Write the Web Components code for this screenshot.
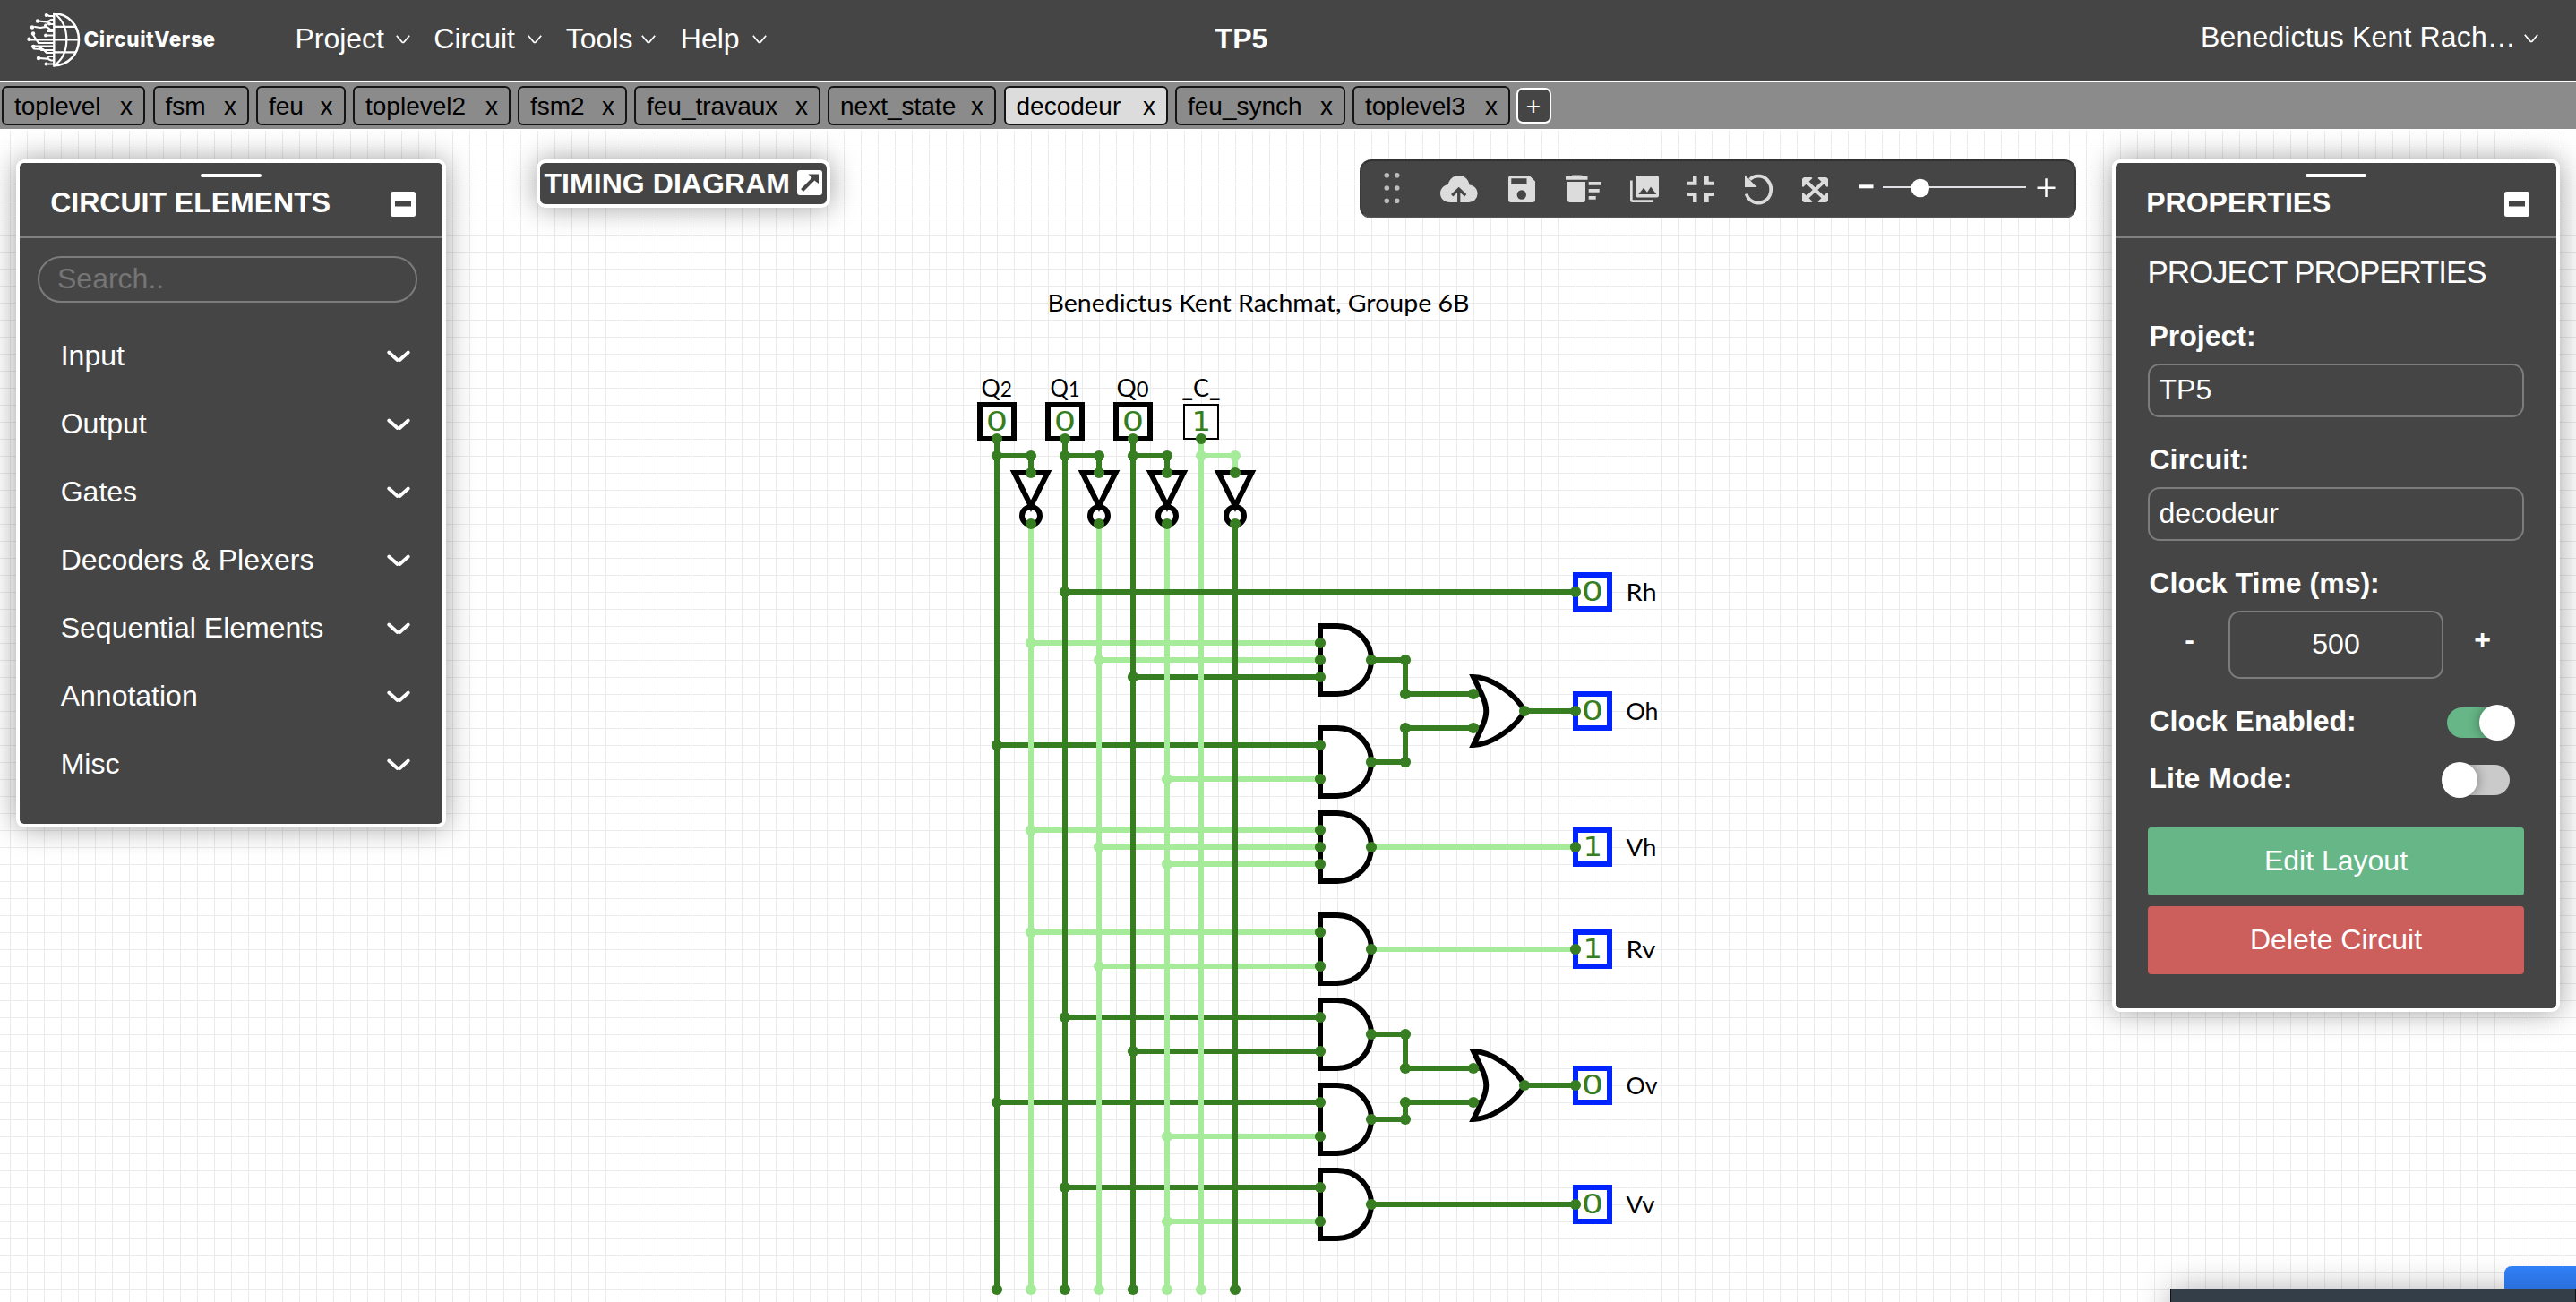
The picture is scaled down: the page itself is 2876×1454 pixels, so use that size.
<!DOCTYPE html>
<html lang="en">
<head>
<meta charset="utf-8">
<title>CircuitVerse</title>
<style>
  html, body { margin: 0; height: 100%; overflow: hidden; background: #fff; }
  body { font: 32px/40px "Liberation Sans", Arial, sans-serif; color: #fff; }
</style>
</head>
<body>
<cv-app></cv-app>
<script>
const define = (name, html, setup) => customElements.define(name, class extends HTMLElement {
  connectedCallback() {
    if (this.shadowRoot) return;
    const root = this.attachShadow({ mode: 'open' });
    root.innerHTML = typeof html === 'function' ? html(this) : html;
    if (setup) setup(this, root);
  }
});

/* Text tracked so that its advance width equals the w attribute. */
define('fit-text', `<style>:host{display:inline-block;white-space:nowrap}</style><span><slot></slot></span>`, (el, root) => {
  const span = root.querySelector('span');
  const natural = span.getBoundingClientRect().width;
  const n = el.textContent.length;
  if (natural) span.style.letterSpacing = ((+el.getAttribute('w') - natural) / n) + 'px';
});

define('cv-logo', `
<style>
  :host { display: flex; height: 90px; }
  svg { flex: none; }
  .name { font-family: Inter, "Liberation Sans", sans-serif; font-weight: 800; font-size: 22.500px; line-height: 30px; padding-top: 28.500px; margin-left: 1.500px; }
</style>
<svg width="62" height="90" viewBox="30 0 62 90" fill="none" stroke="#fff" stroke-width="2.2" stroke-linecap="round">
  <path stroke-width="2.4" d="M60.3 15v58.4"/>
  <path stroke-width="2.6" d="M60.3 15.2C76 15.2 88 28 88 44.3S76 73.2 60.3 73.2"/>
  <path d="M61 15.4C70 22 74.3 32 74.3 44.3S70 66.500 61 73M61 29.800h23.500M61 44.300h27M61 58.300h23.500"/>
  <path d="M60 18h-5l-2-1M60 22h-3l-4 2.500-10-1M60 27h-5M60 33h-4l-4-3-7 1-6-1M60 39.500h-8M59 35h-6M60 44.300H35l-3-.5M60 48H43l-6-9M60 51.500H36M60 56H46M60 59h-8l-4-4-10-.5-1-1M60 63h-5l-3 2.500-8-.500M60 67.500h-3l-3-1.500M60 71.500h-8"/>
  <g fill="#fff" stroke="none"><circle cx="51.700" cy="17" r="2"/><circle cx="42" cy="23.500" r="2.200"/><circle cx="55" cy="26.500" r="2"/><circle cx="36" cy="30.500" r="2.200"/><circle cx="51" cy="28.500" r="2"/><circle cx="37" cy="37.500" r="2.200"/><circle cx="51" cy="39.500" r="2"/><circle cx="32.500" cy="43.800" r="2.200"/><circle cx="37.500" cy="52" r="2.200"/><circle cx="45" cy="53.500" r="2.200"/><circle cx="43" cy="65" r="2.200"/><circle cx="51.500" cy="71.500" r="2"/></g>
</svg>
<div class="name"><fit-text w="147">CircuitVerse</fit-text></div>`);

define('menu-item', `
<style>
  :host { display: flex; justify-content: space-between; }
  svg { margin-top: 15.500px; flex: none; }
</style>
<slot></slot><svg width="16" height="12" viewBox="0 0 16 12" fill="none" stroke="#fff" stroke-width="1.700"><path d="M.8 1.800L6.800 8.800Q8 10 9.200 8.800L15.200 1.800"/></svg>`);

define('cv-header', `
<style>
  :host { display: grid; grid-template-columns: 329.400px 1027.200px 1fr auto; height: 90px; background: #454545; border-bottom: 2px solid #fff; }
  cv-logo { padding-left: 30px; }
  nav { display: flex; padding-top: 22.500px; }
  .title { font-weight: 700; padding-top: 22.500px; }
  .user { padding: 21px 42px 0 0; width: 377px; }
  .user menu-item { height: 40px; }
</style>
<cv-logo></cv-logo>
<nav>
  <menu-item style="width:128.500px;margin-right:26.400px">Project</menu-item>
  <menu-item style="width:120.500px;margin-right:27px">Circuit</menu-item>
  <menu-item style="width:100.500px;margin-right:27.500px">Tools</menu-item>
  <menu-item style="width:96.500px">Help</menu-item>
</nav>
<div class="title">TP5</div>
<div class="user"><menu-item><fit-text w="352">Benedictus Kent Rach…</fit-text></menu-item></div>`);

define('circuit-tab', `
<style>
  :host { display: flex; justify-content: space-between; box-sizing: border-box; height: 44px; padding: 0 12px; border: 2px solid #141414; border-radius: 6px; color: #000; font-size: 28px; line-height: 41px; }
  :host([active]) { background: #dcdcdc; }
</style>
<span><slot></slot></span><span>x</span>`);

define('tab-bar', () => {
  const tabs = [['toplevel', 160, 8.5], ['fsm', 107.5, 8], ['feu', 99.5, 8.5], ['toplevel2', 176, 8], ['fsm2', 122, 8], ['feu_travaux', 208, 8], ['next_state', 188, 8.5], ['decodeur', 183.5, 8], ['feu_synch', 190, 8], ['toplevel3', 176, 6.5]];
  return `<style>
  :host { display: flex; align-items: center; box-sizing: border-box; height: 52px; padding-left: 2px; background: #8b8b8b; }
  .add { box-sizing: border-box; width: 39px; height: 40px; border: 2px solid #fff; border-radius: 7px; background: #454545; font-size: 28px; line-height: 38px; text-align: center; }
  </style>` + tabs.map(([t, w, m]) => `<circuit-tab ${t === 'decodeur' ? 'active' : ''} style="width:${w}px;margin-right:${m}px">${t}</circuit-tab>`).join('') + `<div class="add">+</div>`;
});

define('tool-panel', el => `
<style>
  :host { display: flex; flex-direction: column; box-sizing: border-box; border: 4px solid #fff; border-radius: 9px; background: #454545; box-shadow: 0 0 32px rgba(0,0,0,.38); }
  header { display: flex; flex-direction: column; height: 82px; border-bottom: 2px solid #808080; }
  .grip { align-self: center; width: 68px; height: 4px; margin-top: 12px; border-radius: 2px; background: #fff; }
  .row { display: flex; justify-content: space-between; padding: 0 30px 0 34.200px; font-weight: 700; }
  .row span { margin-top: 8.400px; }
  svg { margin-top: 16px; }
</style>
<header><div class="grip"></div><div class="row"><span>${el.getAttribute('label')}</span>
<svg width="28" height="28"><rect width="28" height="28" rx="2.500" fill="#fff"/><rect x="5" y="11" width="18" height="5.500" fill="#454545"/></svg></div></header>
<slot></slot>`);

define('element-group', `
<style>:host { display: flex; justify-content: space-between; align-items: center; height: 76px; padding: 0 35.500px 0 45.700px; } svg { margin-top: 3px; }</style>
<slot></slot><svg width="28" height="16" viewBox="0 0 28 16" fill="none" stroke="#fff" stroke-width="3.800" stroke-linecap="round"><path d="M3.200 3.500L12.700 12M15.300 12L24.800 3.500"/></svg>`);

define('elements-panel', () => `
<style>
  :host { display: block; width: 480px; }
  tool-panel { height: 746px; }
  .search { display: flex; align-items: center; box-sizing: border-box; width: 424px; height: 52px; margin: 20px 0 20.500px 20px; padding: 0 0 3px 20px; border: 2px solid #7c7c7c; border-radius: 26px; color: #757575; }
</style>
<tool-panel label="CIRCUIT ELEMENTS"><div class="search">Search..</div>
${['Input', 'Output', 'Gates', 'Decoders &amp; Plexers', 'Sequential Elements', 'Annotation', 'Misc'].map(t => `<element-group>${t}</element-group>`).join('')}
</tool-panel>`);

define('timing-button', `
<style>
  :host { display: flex; box-sizing: border-box; width: 328.500px; height: 54px; padding-left: 5px; border: 4px solid #fff; border-radius: 10px; background: #454545; box-shadow: 0 0 32px rgba(0,0,0,.38); font-weight: 700; }
  span { margin-top: 3px; }
  svg { margin: 8px 0 0 8px; }
</style>
<span><fit-text w="274.500">TIMING DIAGRAM</fit-text></span>
<svg width="28" height="28"><rect width="28" height="28" rx="3" fill="#fff"/><path d="M5.500 22.500L20 8" stroke="#454545" stroke-width="4"/><path d="M12.500 4.500H24V15L20.500 12.500L15.500 7.500Z" fill="#454545"/></svg>`);

define('quick-toolbar', () => {
  const icon = (x, w, m, body) => `<svg width="${w}" height="62" viewBox="${x} 180 ${w} 62" style="margin-left:${m}px">${body}</svg>`;
  const dots = [1548.3, 1559.7].map(x => [195.700, 210, 224.300].map(y => `<circle cx="${x}" cy="${y}" r="2.800" fill="#bdbdbd"/>`).join('')).join('');
  return `<style>
  :host { display: flex; box-sizing: border-box; width: 800px; height: 66px; border: 2px solid #3a3a3a; border-top-color: #323232; border-bottom-color: #565656; border-radius: 13px; background: #454545; }
  svg { flex: none; fill: #dcdcdc; overflow: visible; }
  </style>` +
  icon(1545, 18, 25, dots) +
  icon(1608, 42, 45, `<path d="M1619 226h20.600a9.800 9.800 0 0 0 10-9.800c0-5.500-4-9.300-9-9.700C1639.500 200 1634.500 196 1628.700 196S1618 200 1616.800 206C1611.500 207 1608 211.200 1608 216c0 5.700 4.800 10 11 10z"/><path d="M1621.200 218.200l7.500-7.200 7.500 7.200M1628.700 212v14" fill="none" stroke="#454545" stroke-width="3.300"/>`) +
  icon(1684, 30, 34, `<path fill-rule="evenodd" d="M1687 196h20.500l6.500 6.500V223a3 3 0 0 1-3 3h-24a3 3 0 0 1-3-3v-24a3 3 0 0 1 3-3zM1687.300 199.300v6.700h17.200v-6.700z"/><circle cx="1698.800" cy="217.500" r="5.200" fill="#454545"/>`) +
  icon(1748, 40, 34, `<path d="M1748 197h6l1.500-1.500h10l1.500 1.500h5.500v3.800H1748zM1750 203h20v20a3 3 0 0 1-3 3h-14a3 3 0 0 1-3-3zM1773.700 203h14.300v3.800h-14.300zM1773.700 211h12v3.800h-12zM1773.700 219h8v3.800h-8z"/>`) +
  icon(1820, 32, 32, `<path d="M1820 201.500h2.700v21.800h23v2.700h-23a2.700 2.700 0 0 1-2.700-2.700z"/><rect x="1826" y="196" width="26" height="24.500" rx="2.500"/><path d="M1829.300 217l5.700-7.300 4 5 4-6.200 6.300 8.500z" fill="#454545"/>`) +
  icon(1884, 30, 32, `<path d="M1890 196h4.500v10.800H1884v-4h6zM1903 196h4.700v6.800h6.300v4h-11zM1884 215h10.500v11H1890v-7h-6zM1903 215h11v4h-6.300v7h-4.700z"/>`) +
  icon(1948, 30, 34, `<path d="M1949.600 216.500A14.200 15 0 1 0 1953.500 200.500" fill="none" stroke="#dcdcdc" stroke-width="3.800"/><path d="M1948 195.500l13.500 13.500H1948z"/>`) +
  icon(2012, 29, 34, `<path d="M2016 202l21 20M2037 202l-21 20" fill="none" stroke="#dcdcdc" stroke-width="3.800"/><path d="M2014 198h8.500l1 1-10.500 10-1-1v-8.200zM2039 198h-8.500l-1 1 10.500 10 1-1v-8.200zM2014 226h8.500l1-1-10.500-10-1 1v8.200zM2039 226h-8.500l-1-1 10.500-10 1 1v8.200z"/>`) +
  icon(2075, 16.5, 34, `<rect x="2075.500" y="206.300" width="16" height="4" fill="#fff"/>`) +
  icon(2102, 160, 10.5, `<rect x="2102" y="208" width="160" height="2" fill="#dfe1e7"/><circle cx="2143.800" cy="210" r="10.300" fill="#fff"/>`) +
  icon(2274, 21, 12, `<path d="M2274.500 209.700h20M2284.500 199.300v20.700" stroke="#fff" stroke-width="2.500"/>`);
});

define('toggle-switch', el => {
  const on = el.hasAttribute('on');
  const cx = on ? 60 : 20;
  return `<style>:host{display:block;height:40px} svg{display:block;overflow:visible}</style>
  <svg width="${on ? 80 : 78}" height="40"><defs><clipPath id="c"><rect x="4" y="3" width="72" height="34" rx="17"/></clipPath><filter id="f" x="-60%" y="-60%" width="220%" height="220%"><feGaussianBlur stdDeviation="7"/></filter></defs>
  <g clip-path="url(#c)"><rect x="4" y="3" width="72" height="34" fill="${on ? '#66b687' : '#cacaca'}"/><circle cx="${cx}" cy="20" r="20" fill="#000" opacity=".4" filter="url(#f)"/></g>
  <circle cx="${cx}" cy="20" r="20" fill="#fff"/></svg>`;
});

define('properties-panel', `
<style>
  :host { display: block; width: 500px; }
  tool-panel { height: 952px; }
  .body { display: flex; flex-direction: column; padding: 17.300px 36px 0; }
  .heading { font-size: 35px; padding-top: 1px; height: 39px; margin-left: -.5px; }
  .label { font-weight: 700; margin-left: 1.500px; }
  .field { display: flex; align-items: center; box-sizing: border-box; height: 60px; padding: 0 0 2px 10.500px; border: 2px solid #7c7c7c; border-radius: 13px; }
  .clock { display: grid; grid-template-columns: 90px 240px 90px; height: 76px; margin-top: 11px; font-weight: 700; text-align: center; }
  .clock > * { padding-top: 12px; }
  .clock > :first-child { padding-left: 3px; }
  .clock > :last-child { padding-right: 3px; }
  .clock .value { box-sizing: border-box; padding-top: 15px; border: 2px solid #7c7c7c; border-radius: 13px; font-weight: 400; }
  .line { display: flex; justify-content: space-between; height: 40px; }
  .line toggle-switch { margin-top: 2.600px; }
  .btn { height: 76px; line-height: 74px; border-radius: 4px; text-align: center; }
</style>
<tool-panel label="PROPERTIES"><div class="body">
  <div class="heading"><fit-text w="378">PROJECT PROPERTIES</fit-text></div>
  <div class="label" style="margin-top:31.600px">Project:</div>
  <div class="field" style="margin-top:11px">TP5</div>
  <div class="label" style="margin-top:27.200px">Circuit:</div>
  <div class="field" style="margin-top:10.800px">decodeur</div>
  <div class="label" style="margin-top:26.900px">Clock Time (ms):</div>
  <div class="clock"><div>-</div><div class="value">500</div><div>+</div></div>
  <div class="line" style="margin-top:26.900px"><span class="label">Clock Enabled:</span><toggle-switch on style="margin-right:10px"></toggle-switch></div>
  <div class="line" style="margin-top:24px"><span class="label">Lite Mode:</span><toggle-switch style="margin-right:14px"></toggle-switch></div>
  <div class="btn" style="margin-top:35px;background:#66b687">Edit Layout</div>
  <div class="btn" style="margin-top:12px;background:#cc5f5c">Delete Circuit</div>
</div></tool-panel>`);

/* The schematic: one grid unit is 19px; column 0 and row 0 sit on the pin of Q2. */
define('circuit-canvas', () => {
  const D = '#377e22', L = '#a6eb99';
  const X = c => 1113 + 19 * c, Y = r => 490 + 19 * r;
  const wire = (col, ...p) => `<polyline fill="none" stroke="${col}" stroke-width="6" points="${p.map(([c, r]) => X(c) + ',' + Y(r)).join(' ')}"/>`;
  const dot = (c, r, col = D) => `<circle cx="${X(c)}" cy="${Y(r)}" r="6.100" fill="${col}"/>`;
  const and = y => `<path d="M1474 ${y - 38}H1493A38 38 0 0 1 1493 ${y + 38}H1474Z" fill="#fff" stroke="#000" stroke-width="6"/>`;
  const or = y => `<path d="M1645 ${y - 38}C1664 ${y - 38} 1692.500 ${y - 19} 1702 ${y}C1692.500 ${y + 19} 1664 ${y + 38} 1645 ${y + 38}C1664 ${y} 1664 ${y} 1645 ${y - 38}Z" fill="#fff" stroke="#000" stroke-width="6"/>`;
  const digit = (v, x, y) => v
    ? `<text x="${x - 10.500}" y="${y}" font-family="DejaVu Sans" font-size="29.500" fill="${D}" textLength="21.500" lengthAdjust="spacingAndGlyphs">1</text>`
    : `<text x="${x - 12.200}" y="${y}" font-family="DejaVu Sans" font-size="29.500" fill="${D}" textLength="24.400" lengthAdjust="spacingAndGlyphs">0</text>`;
  const cols = [[0, D, 0], [2, L, 5], [4, D, 0], [6, L, 5], [8, D, 0], [10, L, 5], [12, L, 0], [14, D, 5]];
  const taps = [[2, 12, L], [6, 13, L], [8, 14, D], [0, 18, D], [10, 20, L], [2, 23, L], [6, 24, L], [10, 25, L], [2, 29, L], [6, 31, L], [4, 34, D], [8, 36, D], [0, 39, D], [10, 41, L], [4, 44, D], [10, 46, L]];
  let s = '';
  for (const [c, r, col] of taps) s += wire(col, [c, r], [19, r]);
  for (const [c, col, from] of cols) s += wire(col, [c, from], [c, 50]);
  s += wire(D, [4, 9], [34, 9]);
  for (const c of [0, 4, 8, 12]) s += wire(c === 12 ? L : D, [c, 1], [c + 2, 1], [c + 2, 2]);
  s += wire(D, [22, 13], [24, 13], [24, 15], [28, 15]) + wire(D, [22, 19], [24, 19], [24, 17], [28, 17]) + wire(D, [31, 16], [34, 16]);
  s += wire(L, [22, 24], [34, 24]) + wire(L, [22, 30], [34, 30]);
  s += wire(D, [22, 35], [24, 35], [24, 37], [28, 37]) + wire(D, [22, 40], [24, 40], [24, 39], [28, 39]) + wire(D, [31, 38], [34, 38]) + wire(D, [22, 45], [34, 45]);
  /* OR inputs run on to the curved back of the gate */
  for (const r of [15, 17, 37, 39]) s += `<path d="M1645 ${Y(r)}H1653" stroke="${D}" stroke-width="6"/>`;
  for (const r of [13, 19, 24, 30, 35, 40, 45]) s += and(Y(r));
  for (const r of [16, 38]) s += or(Y(r));
  for (const c of [2, 6, 10, 14]) s += `<path d="M${X(c) - 18.500} 528H${X(c) + 18.500}L${X(c)} 565Z" fill="#fff" stroke="#000" stroke-width="6"/><circle cx="${X(c)}" cy="576" r="10" fill="#fff" stroke="#000" stroke-width="6"/><path d="M${X(c) - 2.500} 566h5l-2.500 6z"/>`;
  for (const [c, r, col] of taps) s += dot(c, r, col) + dot(19, r);
  for (const [c, col] of cols) s += dot(c, 50, col);
  s += dot(4, 9);
  for (const c of [0, 4, 8]) s += dot(c, 1) + dot(c + 2, 1);
  s += dot(12, 1, L) + dot(14, 1, L);
  for (const c of [2, 6, 10, 14]) s += dot(c, 2) + dot(c, 5);
  for (const c of [0, 4, 8]) s += `<rect x="${X(c) - 19}" y="452" width="38" height="38" fill="#fff" stroke="#000" stroke-width="6"/>` + digit(0, X(c), 480.500) + dot(c, 0);
  s += `<rect x="1322" y="452" width="38" height="38" fill="#fff" stroke="#000" stroke-width="2"/>` + digit(1, 1341, 480.500) + dot(12, 0);
  for (const [c, r] of [[24, 13], [24, 15], [24, 19], [24, 17], [24, 35], [24, 37], [24, 40], [24, 39], [28, 15], [28, 17], [28, 37], [28, 39], [31, 16], [31, 38]]) s += dot(c, r);
  for (const r of [13, 19, 24, 30, 35, 40, 45]) s += dot(22, r);
  const outs = [['Rh', 9, 0, 34], ['Oh', 16, 0, 36], ['Vh', 24, 1, 34], ['Rv', 30, 1, 33], ['Ov', 38, 0, 35], ['Vv', 45, 0, 32]];
  for (const [t, r, v, w] of outs) s += `<rect x="1759" y="${Y(r) - 19}" width="38" height="38" fill="#fff" stroke="#0024ff" stroke-width="6"/>` + digit(v, 1778, Y(r) + 9.500) + dot(34, r) +
    `<text x="1815.500" y="${Y(r) + 10}" font-size="26.600" textLength="${w}" lengthAdjust="spacingAndGlyphs">${t}</text>`;
  s += [['2', 1095.500, 34.500], ['1', 1172.500, 33], ['0', 1246.500, 36]].map(([n, x, w]) => `<text x="${x}" y="443" font-size="27" textLength="${w}" lengthAdjust="spacingAndGlyphs">Q<tspan font-size="23">${n}</tspan></text>`).join('');
  s += `<text x="1319.500" y="443" font-size="27" textLength="43" lengthAdjust="spacingAndGlyphs">_C_</text>`;
  s += `<text x="1169.500" y="348" font-size="26.600" textLength="471" lengthAdjust="spacingAndGlyphs">Benedictus Kent Rachmat, Groupe 6B</text>`;
  return `<style>:host{display:block} svg{display:block;width:2876px;height:1310px;font-family:Lato,"Liberation Sans",sans-serif}</style>
  <svg viewBox="0 144 2876 1310"><defs><pattern id="g" x="11" y="15" width="19" height="19" patternUnits="userSpaceOnUse"><path d="M0 0h19v1H1v18H0z" fill="#ebebeb"/></pattern></defs>
  <rect y="146" width="2876" height="1308" fill="url(#g)"/><g>${s}</g></svg>`;
});

define('corner-dock', `
<style>
  :host { display: flex; flex-direction: column; align-items: flex-end; width: 453px; height: 40px; }
  .tab { flex: none; position: relative; width: 80px; height: 25px; border-radius: 8px 0 0 0; background: linear-gradient(#3180f6, #2a6fdd); }
  .bar { box-sizing: border-box; width: 453px; height: 300px; flex: none; border: 1px solid #0e1216; background: #333e49; box-shadow: 0 0 34px rgba(0,0,0,.3); }
</style>
<div class="tab"></div><div class="bar"></div>`);

define('cv-app', `
<style>
  :host { display: flex; flex-direction: column; width: 2876px; height: 1454px; overflow: hidden; }
  .stage { display: grid; height: 1310px; }
  .stage > * { grid-area: 1 / 1; }
  .floating { display: flex; align-items: flex-start; padding: 34px 18px 0; z-index: 1; }
  timing-button { margin-left: 100.500px; }
  quick-toolbar { margin: 0 40px 0 auto; }
  corner-dock { align-self: end; justify-self: end; z-index: 2; }
</style>
<cv-header></cv-header>
<tab-bar></tab-bar>
<div class="stage">
  <circuit-canvas></circuit-canvas>
  <div class="floating">
    <elements-panel></elements-panel>
    <timing-button></timing-button>
    <quick-toolbar></quick-toolbar>
    <properties-panel></properties-panel>
  </div>
  <corner-dock></corner-dock>
</div>`);
</script>
</body>
</html>
